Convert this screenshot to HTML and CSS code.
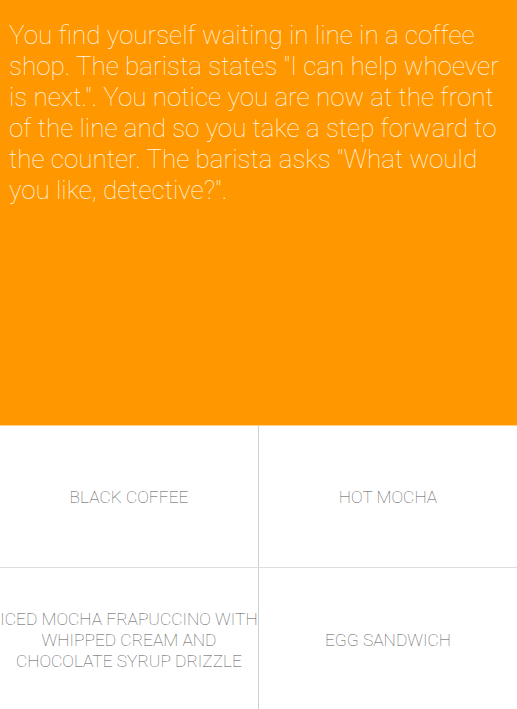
FILE: index.html
```html
<!DOCTYPE html>
<html>
<head>
<meta charset="utf-8">
<link rel="stylesheet" href="styles.css">
</head>
<body>
<div class="app">
  <div class="story">
    <p class="story-text">You find yourself waiting in line in a coffee shop. The barista states "I can help whoever is next.". You notice you are now at the front of the line and so you take a step forward to the counter. The barista asks "What would you like, detective?".</p>
  </div>
  <div class="choices">
    <button class="choice">Black coffee</button>
    <button class="choice">Hot mocha</button>
    <button class="choice">Iced mocha frapuccino with<br>whipped cream and<br>chocolate syrup drizzle</button>
    <button class="choice">Egg sandwich</button>
  </div>
</div>
</body>
</html>
```
FILE: styles.css
```css
html, body {
  margin: 0;
  padding: 0;
  height: 100%;
}
body {
  font-family: Roboto, "Liberation Sans", sans-serif;
  background: #fff;
}
.app {
  display: flex;
  flex-direction: column;
  height: 709px;
}
.story {
  height: 426px;
  background: #ff9800;
  padding: 20px 9px 0 9px;
  box-sizing: border-box;
  border-bottom: 1px solid #ffd08a;
}
.story-text {
  margin: 0;
  font-size: 26px;
  font-weight: 100;
  line-height: 31px;
  color: rgba(255, 255, 255, 0.95);
}
.choices {
  flex: 1;
  display: grid;
  grid-template-columns: 259px 1fr;
  grid-template-rows: 142px 1fr;
}
.choice {
  border: none;
  background: #fff;
  margin: 0;
  padding: 0;
  font-family: Roboto, "Liberation Sans", sans-serif;
  font-weight: 100;
  font-size: 17.4px;
  line-height: 21px;
  color: #555;
  text-transform: uppercase;
  text-align: center;
  white-space: nowrap;
}
.choice:nth-child(1) {
  border-right: 1px solid #cfcfcf;
  border-bottom: 1px solid #dedede;
  padding-top: 1px;
}
.choice:nth-child(2) {
  border-bottom: 1px solid #dedede;
  padding-top: 1px;
}
.choice:nth-child(3) {
  border-right: 1px solid #cfcfcf;
  padding-top: 3px;
}
.choice:nth-child(4) {
  padding-top: 3px;
}
```
